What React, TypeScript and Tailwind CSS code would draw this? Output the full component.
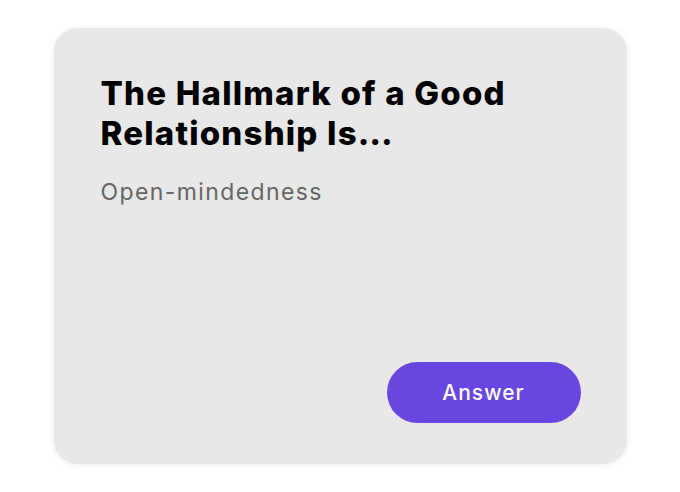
export default function App() {
  return (
    <div className="flex h-[492px] w-[680px] items-center justify-center bg-white font-['Inter',sans-serif]">
      <div className="flex h-[436px] w-[573px] flex-col justify-between rounded-[24px] bg-[#e8e8e8] px-[47px] pb-[41px] pt-[45px] shadow-[0_1px_6px_rgba(0,0,0,0.08)]">
        <div>
          <h2 className="text-[33px] font-extrabold leading-[40px] tracking-[1.2px] text-black">
            The Hallmark of a Good
            <br />
            Relationship Is…
          </h2>
          <p className="mt-[25px] text-[23px] leading-[28px] tracking-[1.4px] text-[#666666]">
            Open-mindedness
          </p>
        </div>
        <button className="mr-[-1px] h-[61px] w-[194px] self-end rounded-full bg-[#6847e0] text-[21px] font-medium tracking-[1px] text-white">
          Answer
        </button>
      </div>
    </div>
  );
}
